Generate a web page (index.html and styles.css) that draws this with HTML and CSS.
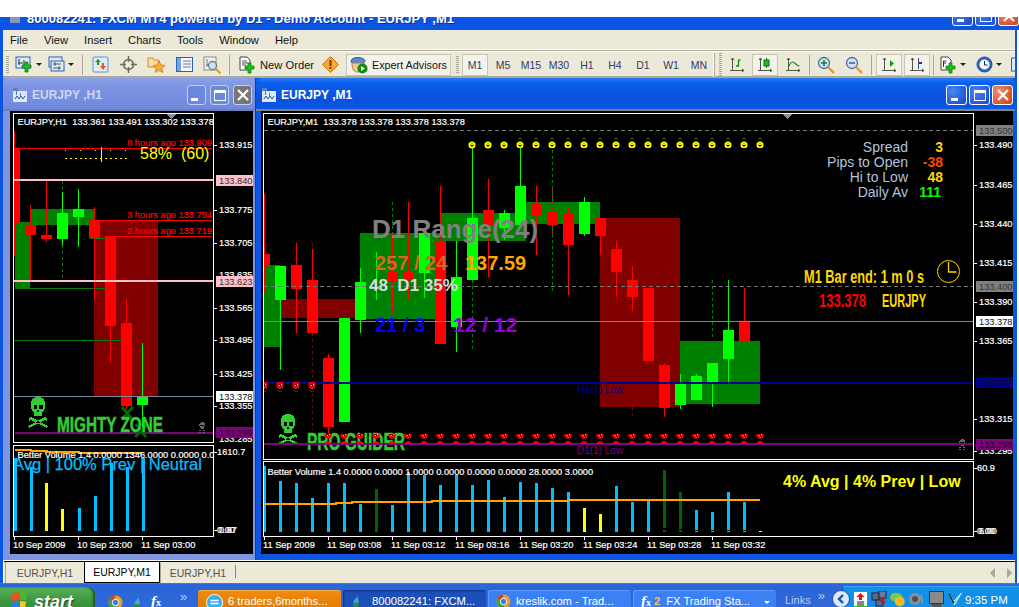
FILE: index.html
```html
<!DOCTYPE html>
<html lang="en">
<head>
<meta charset="utf-8">
<title>MetaTrader</title>
<link rel="stylesheet" href="styles.css">
</head>
<body>
<svg class="defs" width="0" height="0" aria-hidden="true">
  <defs>
    <pattern id="yd" width="16" height="10" patternUnits="userSpaceOnUse"><circle cx="8" cy="5" r="2.500" fill="#000" stroke="#ff0" stroke-width="2"/><rect x="7" y="4" width="2" height="1" fill="#ff0"/></pattern>
    <pattern id="rd" width="16" height="10" patternUnits="userSpaceOnUse"><circle cx="8" cy="5" r="2.500" fill="#000" stroke="#f00" stroke-width="2.400"/><rect x="7" y="5" width="1" height="1" fill="#ff0"/><rect x="9" y="4" width="1" height="1" fill="#ff0"/></pattern>
    <symbol id="skull" viewBox="0 0 20 32">
      <path fill-rule="evenodd" d="M10 0C4 0 2.500 4 2.500 8c0 4 1.500 5.500 3.500 7v4h8v-4c2-1.500 3.500-3 3.500-7 0-4-1.500-8-7.500-8zM5.500 7.500h3.500v4h-3.500zM11 7.500h3.500v4H11zM9 12.500h2v2H9z"/>
      <path d="M1 21l2-1 15 8 2 1-1 2-2-1L3 23l-2 1zM19 21l-2-1-15 8-2 1 1 2 2-1 14-7 2 1z"/>
    </symbol>
    <symbol id="chico" viewBox="0 0 14 14"><path fill="#dfe7f5" d="M0 0h5v3h9v11H0z"/><path fill="#5a7fc0" d="M0 0h5v3H0zM7 5h1v3H7zM3 2h1v5H3z"/><path fill="none" stroke="#2a5aa8" d="M2 11l2-3 2 3 2-3 2 3 2-3"/></symbol>
    <symbol id="axes" viewBox="0 0 16 16"><path fill="none" stroke="#55534a" d="M3.500 1v13M1 13.500h14M2 3l1.500-2L5 3M13 12l2 1.500-2 1.500"/></symbol>
  </defs>
</svg>

<div class="topgap"></div>
<header class="titlebar">
  <span class="appico"></span>
  <span class="apptitle">800082241: FXCM MT4 powered by D1 - Demo Account - EURJPY ,M1</span>
  <div class="winbtns appbtns">
    <span class="wb"><i class="g-min"></i></span><span class="wb"><i class="g-max"></i></span><span class="wb wb-close"><svg viewBox="0 0 12 12"><path d="M1 1l10 10M11 1L1 11" stroke="#fff" stroke-width="2.200"/></svg></span>
  </div>
</header>

<nav class="menubar">
  <span>File</span><span>View</span><span>Insert</span><span>Charts</span><span>Tools</span><span>Window</span><span>Help</span>
</nav>

<div class="toolbar">
  <span class="grip"></span>
  <span class="ti w32"><svg width="18" height="18" viewBox="0 0 18 18"><rect x="1" y="1" width="14" height="11" fill="#dfeaf8" stroke="#2a62b0"/><path d="M4 3v6M3 7h5M9 4v5" stroke="#333" fill="none"/><path d="M10 6h3v3h3v3h-3v4h-3v-4H7V9h3z" fill="#1cc01c" stroke="#0a700a" stroke-width=".7"/></svg><b class="caret"></b></span>
  <span class="ti w34"><svg width="17" height="17" viewBox="0 0 17 17"><rect x="1" y="1" width="13" height="10" fill="#dfeaf8" stroke="#2a62b0"/><rect x="3" y="5" width="13" height="10" fill="#dfeaf8" stroke="#2a62b0"/><path d="M5 8h8M5 12h8M7 6v4M11 10v4" stroke="#555" fill="none"/></svg><b class="caret"></b></span>
  <span class="sep w8"></span>
  <span class="ti"><svg width="17" height="17" viewBox="0 0 17 17"><rect x="1" y="1" width="15" height="15" rx="1" fill="#dfeaf8" stroke="#6a90c8"/><path d="M5 9V6H3l3-3 3 3H7v3z" fill="#12a012"/><path d="M10 7v3H8l3 4 3-4h-2V7z" fill="#e05a20"/></svg></span>
  <span class="ti"><svg width="17" height="17" viewBox="0 0 17 17"><circle cx="8.500" cy="8.500" r="5" fill="none" stroke="#6b6b60" stroke-width="1.500"/><path d="M8.500 0v6M8.500 11v6M0 8.500h6M11 8.500h6" stroke="#6b6b60" stroke-width="1.500"/></svg></span>
  <span class="ti"><svg width="19" height="17" viewBox="0 0 19 17"><path d="M1 2h5l1 2h5v7H1z" fill="#f8dca0" stroke="#c09040"/><path d="M12 5l2 4 4 .5-3 3 .8 4-3.800-2-3.800 2 .8-4-3-3 4-.5z" fill="#f8b030" stroke="#c87010" stroke-width=".7"/></svg></span>
  <span class="ti"><svg width="17" height="15" viewBox="0 0 17 15"><rect x=".5" y=".5" width="16" height="14" fill="#f4f8fe" stroke="#2a62b0"/><rect x="1" y="1" width="4" height="13" fill="#7aa2dc"/><path d="M7 4h8M7 7h8M7 10h8" stroke="#6a7a90"/></svg></span>
  <span class="ti"><svg width="19" height="18" viewBox="0 0 19 18"><rect x="1" y="1" width="12" height="13" fill="#f4f4ee" stroke="#8a8a80"/><path d="M4 3v8M3 9h7" stroke="#777" fill="none"/><circle cx="9.500" cy="9.500" r="4" fill="#cfe0f6" stroke="#6a7a90" stroke-width="1.300"/><path d="M12.500 12.500l5 5" stroke="#e09a30" stroke-width="2"/></svg></span>
  <span class="sep w6"></span>
  <span class="neworder"><svg width="17" height="18" viewBox="0 0 17 18"><path d="M1 1h7l3 3v10H1z" fill="#fff" stroke="#444"/><path d="M3 5h5M3 7h6M3 9h4" stroke="#555"/><path d="M9 7h3v3h3v3h-3v4H9v-4H6v-3h3z" fill="#1cc01c" stroke="#0a700a" stroke-width=".7"/></svg>New Order</span>
  <span class="ti w26"><svg width="17" height="17" viewBox="0 0 17 17"><path d="M8.500.5l8 8-8 8-8-8z" fill="#f8a838" stroke="#c87010"/><rect x="7.500" y="4" width="2" height="6" fill="#7a3a10"/><rect x="7.500" y="11" width="2" height="2" fill="#7a3a10"/></svg></span>
  <span class="ea"><svg width="18" height="18" viewBox="0 0 18 18"><ellipse cx="8" cy="5" rx="7" ry="3.500" fill="#5a8ad0" stroke="#2a5aa0"/><path d="M2 7c0 7 2 9 6 9s6-3 6-9z" fill="#f0c890" stroke="#b08040"/><circle cx="12.500" cy="12.500" r="5" fill="#128a12"/><path d="M11 10l4 2.500-4 2.500z" fill="#fff"/></svg>Expert Advisors</span>
  <span class="grip wide"></span>
  <div class="tfs">
    <span class="tf on">M1</span><span class="tf">M5</span><span class="tf">M15</span><span class="tf">M30</span><span class="tf">H1</span><span class="tf">H4</span><span class="tf">D1</span><span class="tf">W1</span><span class="tf">MN</span>
  </div>
  <span class="grip break"></span>
  <span class="ti"><svg width="16" height="16"><use href="#axes"/><path d="M9.500 3v6H7M9.500 3h2" fill="none" stroke="#128a12" stroke-width="1.300"/></svg></span>
  <span class="tibox"><svg width="16" height="16"><use href="#axes"/><path d="M9.500 1v10" stroke="#0a700a"/><rect x="7" y="3" width="5" height="6" fill="#1cc01c" stroke="#0a700a"/></svg></span>
  <span class="ti"><svg width="16" height="16"><use href="#axes"/><path d="M3.500 10c2-5 4-6 6-4s3 3 5 3" fill="none" stroke="#128a12" stroke-width="1.100"/></svg></span>
  <span class="sep w5"></span>
  <span class="ti"><svg width="18" height="18" viewBox="0 0 18 18"><circle cx="7" cy="7" r="5.500" fill="#cfe0f6" stroke="#4a6fa8" stroke-width="1.300"/><path d="M4 7h6M7 4v6" stroke="#128a12" stroke-width="1.600"/><path d="M11 11l6 6" stroke="#e09a30" stroke-width="2.400"/></svg></span>
  <span class="ti"><svg width="18" height="18" viewBox="0 0 18 18"><circle cx="7" cy="7" r="5.500" fill="#cfe0f6" stroke="#4a6fa8" stroke-width="1.300"/><path d="M4 7h6" stroke="#3a6a9a" stroke-width="1.600"/><path d="M11 11l6 6" stroke="#e09a30" stroke-width="2.400"/></svg></span>
  <span class="sep w7"></span>
  <span class="tibox"><svg width="16" height="16"><use href="#axes"/><path d="M9 3l4 3.500-4 3.500z" fill="#12a012"/></svg></span>
  <span class="tibox"><svg width="16" height="16"><use href="#axes"/><path d="M9.500 1v11" stroke="#2a4ab0"/><path d="M10 5h3v2h-3z" fill="#a01010"/></svg></span>
  <span class="sep w4"></span>
  <span class="ti w36"><svg width="17" height="18" viewBox="0 0 17 18"><path d="M1 1h7l3 3v10H1z" fill="#fff" stroke="#444"/><path d="M3.500 11V5h3M3 7h3" stroke="#333" fill="none"/><path d="M9 7h3v3h3v3h-3v4H9v-4H6v-3h3z" fill="#1cc01c" stroke="#0a700a" stroke-width=".7"/></svg><b class="caret"></b></span>
  <span class="ti w35"><svg width="17" height="17" viewBox="0 0 17 17"><circle cx="8.500" cy="8.500" r="7.500" fill="#2a6ac0" stroke="#1a4a90"/><circle cx="8.500" cy="8.500" r="5" fill="#f4f8fe"/><path d="M8.500 5v4h3" stroke="#224" fill="none"/></svg><b class="caret"></b></span>
  <span class="ti w9"><svg width="4" height="16" viewBox="0 0 4 16"><rect x=".5" y="1" width="8" height="13" fill="#dfeaf8" stroke="#2a62b0"/></svg></span>
</div>

<main class="mdi">
  <section class="win inactive">
    <div class="wintitle">
      <svg class="wico" width="14" height="14"><use href="#chico"/></svg>
      <span class="wname">EURJPY ,H1</span>
      <div class="winbtns"><span class="wb"><i class="g-min"></i></span><span class="wb"><i class="g-max"></i></span><span class="wb wb-close"><svg viewBox="0 0 12 12"><path d="M1 1l10 10M11 1L1 11" stroke="#fff" stroke-width="2.200"/></svg></span></div>
    </div>
    <svg class="chart chart-l" viewBox="10 111 243 443" width="243" height="443" shape-rendering="crispEdges">
      <defs><clipPath id="cl"><rect x="14" y="114" width="199" height="422"/></clipPath></defs>
      <g clip-path="url(#cl)">
        <path fill="#008000" d="M15 222h15v67H15zM30 209h65v16H30z"/>
        <path fill="#800000" d="M94 220h64v176H94z"/>
        <path stroke="#008000" d="M90 238.500h15M30 288.500h75M14 340.500h107"/>
        <path stroke="#f00" d="M14.500 131v125M30.500 205v75M46.500 181v61M94.500 207v93M110.500 326v37M126.500 299v111"/>
        <path stroke="#0f0" d="M62.500 192v53M78.500 189v58M142.500 343v90"/>
        <path stroke="#008000" stroke-dasharray="3 3" d="M62.500 181v11M62.500 245v35"/>
        <path fill="#f00" d="M14 148h6v75h-6zM25 225h11v10H25zM41 235h11v4H41zM89 220h11v18H89zM105 236h11v90h-11zM121 323h11v83h-11z"/>
        <path fill="#0f0" d="M57 213h11v26H57zM73 209h11v8H73zM137 396h11v9h-11z"/>
        <path stroke="#f00" d="M14 148.500h198M94 220.500h118M105 236.500h107"/>
        <path stroke="#ffc0cb" stroke-width="2" d="M14 180h199M14 281h199"/>
        <path stroke="#778899" d="M14 396.500h199"/>
        <path stroke="#800080" stroke-width="2" d="M15 433h198"/>
        <path stroke="#006400" stroke-width="3" shape-rendering="auto" d="M122 407l10 12M133 407l-11 12M136 424l10 13M148 424l-13 13"/>
        <path stroke="#ff0" stroke-dasharray="2 3" d="M65 158.500h65"/>
        <path stroke="#ff0" stroke-dasharray="1 14" d="M65 150.500h65"/>
        <path stroke="#ff0" d="M101.500 147v15"/>
        <svg x="28" y="397" width="20" height="32" class="sk-g"><use href="#skull"/></svg>
        <svg x="198" y="422" width="8" height="12" class="sk-d"><use href="#skull"/></svg>
        <text class="t-red" x="212" y="146">8 hours ago 133.909</text>
        <text class="t-red" x="212" y="218">3 hours ago 133.754</text>
        <text class="t-red" x="212" y="234">2 hours ago 133.719</text>
        <text class="t-ylw" x="140" y="159">58%  (60)</text>
        <text class="t-zone" x="57" y="432" textLength="106" lengthAdjust="spacingAndGlyphs">MIGHTY ZONE</text>
        <path fill="#00bfff" d="M14 458h3v73h-3zM30 467h3v64h-3zM78 508h3v23h-3zM94 496h3v35h-3zM110 463h3v68h-3zM126 467h3v64h-3zM142 458h3v73h-3z"/>
        <path fill="#ff0" d="M45 483h3v48h-3zM61 509h3v22h-3z"/>
        <path stroke="#ffa500" stroke-width="1.500" fill="none" d="M15 450h16v1h16v1h32v1h63"/>
        <text class="t" x="17.500" y="125">EURJPY,H1  133.361 133.491 133.302 133.378</text>
        <text class="t" x="17.500" y="458">Better Volume 1.4 0.0000 1346.0000 0.0000 0.0000 0.</text>
        <text class="t-sky" x="13" y="470">Avg | 100% Prev | Neutral</text>
      </g>
      <path fill="#8090a0" d="M167 114h9l-4.500 5z"/>
      <path fill="none" stroke="#fff" d="M13.500 113.500h200v329h-200zM13.500 445.500h200v91h-200z"/>
      <path stroke="#fff" d="M213 145.500h4M213 210.500h4M213 243.500h4M213 308.500h4M213 340.500h4M213 374.500h4M213 406.500h4M213 452.500h4M213 530.500h4M14.500 536v4M78.500 536v4M142.500 536v4"/>
      <text class="t" x="219" y="148">133.915</text>
      <text class="t" x="219" y="213">133.775</text>
      <text class="t" x="219" y="246">133.705</text>
      <text class="t" x="219" y="278">133.635</text>
      <text class="t" x="219" y="311">133.565</text>
      <text class="t" x="219" y="343">133.495</text>
      <text class="t" x="219" y="377">133.425</text>
      <text class="t" x="219" y="409">133.355</text>
      <text class="t" x="219" y="442">133.285</text>
      <rect x="216" y="175" width="37" height="11" fill="#ffc0cb"/><text class="t-d" x="219" y="184">133.840</text>
      <rect x="216" y="276" width="37" height="11" fill="#ffc0cb"/><text class="t-d" x="219" y="285">133.623</text>
      <rect x="216" y="391" width="37" height="11" fill="#fff"/><text class="t-k" x="219" y="400">133.378</text>
      <rect x="216" y="427" width="37" height="11" fill="#800080"/><text class="t-k" x="219" y="436">133.299</text>
      <text class="t" x="217" y="455">1610.7</text>
      <text class="t" x="217" y="533">0.00</text><text class="t" x="219" y="533">0.67</text>
      <text class="t" x="13" y="548">10 Sep 2009</text>
      <text class="t" x="77" y="548">10 Sep 23:00</text>
      <text class="t" x="141" y="548">11 Sep 03:00</text>
    </svg>
  </section>

  <section class="win active">
    <div class="wintitle">
      <svg class="wico" width="14" height="14"><use href="#chico"/></svg>
      <span class="wname">EURJPY ,M1</span>
      <div class="winbtns"><span class="wb"><i class="g-min"></i></span><span class="wb"><i class="g-max"></i></span><span class="wb wb-close"><svg viewBox="0 0 12 12"><path d="M1 1l10 10M11 1L1 11" stroke="#fff" stroke-width="2.200"/></svg></span></div>
    </div>
    <svg class="chart chart-r" viewBox="261 111 752 443" width="752" height="443" shape-rendering="crispEdges">
      <defs><clipPath id="cr"><rect x="264" y="114" width="709" height="422"/></clipPath></defs>
      <g clip-path="url(#cr)">
        <path fill="#008000" d="M264 265h16v82h-16zM360 233h80v86h-80zM441 213h85v28h-85zM526 202h74v22h-74zM680 341h80v63h-80z"/>
        <path fill="#800000" d="M280 299h80v19h-80zM600 218h80v189h-80z"/>
        <path stroke="#f00" d="M264.500 194v97M296.500 243v90M312.500 249v31M328.500 354v83M392.500 233v80M408.500 202v98M440.500 186v55M488.500 179v98M536.500 186v69M552.500 187v49M568.500 207v88M600.500 236v19M616.500 241v56M632.500 266v45M664.500 363v54M744.500 288v34"/>
        <path stroke="#0f0" d="M280.500 300v70M360.500 268v65M376.500 252v48M424.500 233v65M456.500 241v111M472.500 147v71M504.500 210v30M520.500 145v41M584.500 197v39M680.500 374v35M696.500 374v2M712.500 383v24M728.500 280v102"/>
        <path stroke="#800000" stroke-dasharray="3 3" d="M312.500 243v6M312.500 333v97M632.500 407v9"/>
        <path stroke="#008000" stroke-dasharray="3 3" d="M392.500 202v31M472.500 280v72M552.500 150v143M712.500 280v60"/>
        <path fill="#f00" d="M264 254h6v11h-6zM291 265h11v24h-11zM307 280h11v53h-11zM323 358h11v69h-11zM387 271h11v10h-11zM403 272h11v8h-11zM435 241h11v103h-11zM483 210h11v15h-11zM531 204h11v12h-11zM547 211h11v14h-11zM563 213h11v32h-11zM595 218h11v18h-11zM611 249h11v23h-11zM627 280h11v17h-11zM643 288h11v73h-11zM659 365h11v43h-11zM739 322h11v20h-11z"/>
        <path fill="#0f0" d="M275 266h11v34h-11zM339 318h11v104h-11zM355 282h11v38h-11zM419 233h11v40h-11zM451 277h11v50h-11zM467 218h11v62h-11zM499 213h11v15h-11zM515 186h11v39h-11zM579 202h11v32h-11zM675 384h11v21h-11zM691 376h11v24h-11zM707 363h11v20h-11zM723 330h11v29h-11z"/>
        <path stroke="#778899" d="M264 321.500h709"/>
        <path stroke="#777" stroke-dasharray="4 3" d="M264 130.500h709M264 286.500h709"/>
        <path stroke="#00008b" stroke-width="2" d="M264 383h709"/>
        <text class="t-navy" x="577" y="393">H1(1) Low</text>
        <svg x="278" y="414" width="20" height="32" class="sk-g"><use href="#skull"/></svg>
        <svg x="958" y="439" width="8" height="12" class="sk-d"><use href="#skull"/></svg>
        <text class="t-pro" x="307" y="450" textLength="98" lengthAdjust="spacingAndGlyphs">PRO GUIDER</text>
        <path stroke="#800080" stroke-width="2" d="M264 444h709"/>
        <text class="t-pur" x="577" y="454">D1(1) Low</text>
        <rect x="463.500" y="141" width="48" height="10" fill="url(#yd)"/>
        <rect x="511.500" y="138" width="256" height="10" fill="url(#yd)"/>
        <rect x="263.500" y="382" width="56" height="10" fill="url(#rd)"/>
        <rect x="319.500" y="434" width="448" height="10" fill="url(#rd)"/>
        <text class="t-rng" x="372" y="238">D1 Range(24)</text>
        <text class="t-cho" x="375" y="270">257 / 24</text>
        <text class="t-org" x="465" y="270">137.59</text>
        <text class="t-gns" x="369" y="291">48  D1 35%</text>
        <text class="t-blu" x="375" y="332">21 / 3</text>
        <text class="t-vio" x="453" y="332">12 / 12</text>
        <text class="t-lbl" x="908" y="152">Spread</text>
        <text class="t-lbl" x="908" y="167">Pips to Open</text>
        <text class="t-lbl" x="908" y="182">Hi to Low</text>
        <text class="t-lbl" x="908" y="197">Daily Av</text>
        <text class="t-val v-gold" x="943" y="152">3</text>
        <text class="t-val v-oran" x="943" y="167">-38</text>
        <text class="t-val v-gold" x="943" y="182">48</text>
        <text class="t-val v-lime" x="941" y="197">111</text>
        <text class="t-imp v-fgold" x="804" y="283" textLength="120" lengthAdjust="spacingAndGlyphs">M1 Bar end: 1 m 0 s</text>
        <text class="t-imp v-fred" x="819" y="307" textLength="47" lengthAdjust="spacingAndGlyphs">133.378</text>
        <text class="t-imp v-fgold" x="882" y="307" textLength="44" lengthAdjust="spacingAndGlyphs">EURJPY</text>
        <g shape-rendering="auto" fill="none" stroke="#ffd700"><circle cx="948.500" cy="271.500" r="11"/><path d="M948.500 262v10h8" stroke-width="1.300"/></g>
        <text class="t" x="267.500" y="125">EURJPY,M1  133.378 133.378 133.378 133.378</text>
        <path fill="#00bfff" d="M264 466h2v66h-2zM279 481h3v51h-3zM295 483h3v49h-3zM311 498h3v34h-3zM327 483h3v49h-3zM343 483h3v49h-3zM359 504h3v28h-3zM391 505h3v27h-3zM407 472h3v60h-3zM423 475h3v57h-3zM439 485h3v47h-3zM455 475h3v57h-3zM471 485h3v47h-3zM487 480h3v52h-3zM503 497h3v35h-3zM519 482h3v50h-3zM535 483h3v49h-3zM551 488h3v44h-3zM567 492h3v40h-3zM615 486h3v46h-3zM631 502h3v30h-3zM647 501h3v31h-3zM695 510h3v20h-3zM695 531h3v1h-3zM711 512h3v18h-3zM711 531h3v1h-3zM727 492h3v38h-3zM727 531h3v1h-3zM743 502h3v28h-3zM743 531h3v1h-3z"/>
        <path fill="#006400" d="M375 489h3v43h-3zM663 470h3v58h-3zM663 530h3v2h-3zM679 492h3v37h-3zM679 530h3v2h-3z"/>
        <path fill="#ff0" d="M583 508h3v24h-3zM599 514h3v18h-3zM759 531h3v1h-3z"/>
        <path fill="none" stroke="#ffa500" stroke-width="2" d="M264 504h72v-1h16v-1h80v-1h136v-1h192"/>
        <text class="t" x="267.500" y="475">Better Volume 1.4 0.0000 0.0000 1.0000 0.0000 0.0000 0.0000 28.0000 3.0000</text>
        <text class="t-avg" x="783" y="487">4% Avg | 4% Prev | Low</text>
      </g>
      <path fill="#8090a0" d="M783 114h9l-4.500 5z"/>
      <path fill="none" stroke="#fff" d="M263.500 113.500h710v346h-710zM263.500 461.500h710v75h-710z"/>
      <path stroke="#fff" d="M973 145.500h4M973 185.500h4M973 224.500h4M973 263.500h4M973 302.500h4M973 341.500h4M973 419.500h4M973 451.500h4M973 468.500h4M973 531.500h4M264.500 536v4M328.500 536v4M392.500 536v4M456.500 536v4M520.500 536v4M584.500 536v4M648.500 536v4M712.500 536v4"/>
      <text class="t" x="979" y="148">133.490</text>
      <text class="t" x="979" y="188">133.465</text>
      <text class="t" x="979" y="227">133.440</text>
      <text class="t" x="979" y="266">133.415</text>
      <text class="t" x="979" y="305">133.390</text>
      <text class="t" x="979" y="344">133.365</text>
      <text class="t" x="979" y="422">133.315</text>
      <text class="t" x="979" y="454">133.295</text>
      <rect x="976" y="125" width="37" height="11" fill="#808080"/><text class="t-d" x="979" y="134">133.500</text>
      <rect x="976" y="281" width="37" height="11" fill="#808080"/><text class="t-d" x="979" y="290">133.400</text>
      <rect x="976" y="316" width="37" height="11" fill="#fff"/><text class="t-k" x="979" y="325">133.378</text>
      <rect x="976" y="377" width="37" height="11" fill="#00008b"/><text class="t-k" x="979" y="386">133.338</text>
      <rect x="976" y="439" width="37" height="11" fill="#800080"/><text class="t-k" x="979" y="448">133.299</text>
      <text class="t" x="977" y="471">60.9</text>
      <text class="t" x="977" y="534">0.00</text><text class="t" x="979" y="534">6.00</text>
      <text class="t" x="263" y="548">11 Sep 2009</text>
      <text class="t" x="327" y="548">11 Sep 03:08</text>
      <text class="t" x="391" y="548">11 Sep 03:12</text>
      <text class="t" x="455" y="548">11 Sep 03:16</text>
      <text class="t" x="519" y="548">11 Sep 03:20</text>
      <text class="t" x="583" y="548">11 Sep 03:24</text>
      <text class="t" x="647" y="548">11 Sep 03:28</text>
      <text class="t" x="711" y="548">11 Sep 03:32</text>
    </svg>
  </section>
</main>

<div class="tabbar">
  <span class="tab">EURJPY,H1</span>
  <span class="tab on">EURJPY,M1</span>
  <span class="tab last">EURJPY,H1</span>
  <span class="tabarrows"><svg width="24" height="10" viewBox="0 0 24 10"><path d="M6 0v10L1 5zM18 0v10l5-5z" fill="#a8a69a"/></svg></span>
</div>

<footer class="taskbar">
  <div class="start">
    <svg width="18" height="18" viewBox="0 0 18 18"><path d="M1 2l7-2v8l-7 1z" fill="#e8541c"/><path d="M9 0l7 1-1 7-6-.5z" fill="#4cb832"/><path d="M0 10l8-1v8l-8 1z" fill="#2a7ae8"/><path d="M9 9l6 .5-1 8-5-.5z" fill="#f8c818"/></svg>
    <span>start</span>
  </div>
  <div class="quick">
    <svg width="15" height="15" viewBox="0 0 15 15"><circle cx="7.500" cy="7.500" r="7" fill="#e8a020"/><path d="M7.500.5a7 7 0 0 0-6 3.500l3 5z" fill="#d83828"/><path d="M1.500 4a7 7 0 0 0 5 10.500l3-5z" fill="#3aa838"/><circle cx="7.500" cy="7.500" r="3.200" fill="#3a7ae0" stroke="#fff"/></svg>
    <svg width="10" height="15" viewBox="0 0 10 15"><path d="M7 0C8 3 3 5 2 9c-.5 3 1 5 3 5s3-2 3-5C8 5 6 4 7 0z" fill="#3aa8d8"/><path d="M2 9c2 0 4 1 6 0 0 3-1 5-3 5S2 12 2 9z" fill="#2a8a3a"/></svg>
    <span class="fx">f<small>x</small></span>
    <span class="chev">»</span>
  </div>
  <div class="tasks">
    <span class="task orange"><svg width="17" height="17" viewBox="0 0 17 17"><circle cx="8.500" cy="8.500" r="8" fill="#3ab0f0" stroke="#fff"/><path d="M4.500 6.500h8M4.500 9.500h8" stroke="#fff" stroke-width="1.600"/></svg>6 traders,6months...</span>
    <span class="task pressed"><svg width="10" height="14" viewBox="0 0 10 15"><path d="M7 0C8 3 3 5 2 9c-.5 3 1 5 3 5s3-2 3-5C8 5 6 4 7 0z" fill="#3aa8d8"/><path d="M2 9c2 0 4 1 6 0 0 3-1 5-3 5S2 12 2 9z" fill="#2a8a3a"/></svg><b>800082241: FXCM...</b></span>
    <span class="task"><svg width="15" height="15" viewBox="0 0 15 15"><circle cx="7.500" cy="7.500" r="7" fill="#e8a020"/><path d="M7.500.5a7 7 0 0 0-6 3.500l3 5z" fill="#d83828"/><path d="M1.500 4a7 7 0 0 0 5 10.500l3-5z" fill="#3aa838"/><circle cx="7.500" cy="7.500" r="3.200" fill="#3a7ae0" stroke="#fff"/></svg>kreslik.com - Trad...</span>
    <span class="task fxtask"><span class="fx">f<small>x</small></span><em>2</em>FX Trading Sta...<b class="dn"></b></span>
  </div>
  <span class="links">Links</span><span class="chev">»</span>
  <div class="tray">
    <span class="trayback"><svg width="10" height="10" viewBox="0 0 10 10"><path d="M7 1L3 5l4 4" fill="none" stroke="#1a50b0" stroke-width="2.400"/></svg></span>
    <svg width="15" height="16" viewBox="0 0 15 16"><rect x=".5" y=".5" width="14" height="15" fill="#fff" stroke="#18c018"/><path d="M7.500 2l4 4H9v3H6V6H3.500z" fill="#e01010"/><rect x="4" y="10" width="7" height="5" fill="#888"/></svg>
    <svg width="16" height="16" viewBox="0 0 16 16"><rect x="1" y="2" width="7" height="7" fill="#5a6a90" stroke="#223"/><rect x="8" y="0" width="7" height="7" fill="#6a7aa0" stroke="#223"/><rect x="5" y="9" width="7" height="6" fill="#5a6a90" stroke="#223"/><path d="M10 7l4 5M14 7l-4 5" stroke="#e01010" stroke-width="1.500"/></svg>
    <svg width="16" height="16" viewBox="0 0 18 16"><ellipse cx="7" cy="6" rx="7" ry="5" fill="#7ac850"/><circle cx="11" cy="11" r="5.500" fill="#f8b820"/></svg>
    <svg width="14" height="16" viewBox="0 0 14 16"><circle cx="6" cy="8" r="6" fill="#8a8f98"/><circle cx="6" cy="8" r="3" fill="#4a4f58"/><path d="M12 4l2 9" stroke="#9ab"/></svg>
    <svg class="trayscr" width="15" height="16" viewBox="0 0 15 16"><rect x=".5" y=".5" width="14" height="12" fill="#8a8a8a" stroke="#333"/><rect x="3" y="13" width="9" height="3" fill="#555"/></svg>
    <svg width="14" height="16" viewBox="0 0 17 16"><path d="M1 1l6 10L16 1l-8 14z" fill="#30d8c0" stroke="#fff"/><path d="M1 1l6 12" stroke="#111" stroke-width="1.500"/></svg>
    <time>9:35 PM</time>
  </div>
</footer>
</body>
</html>
```

FILE: styles.css
```css
* { box-sizing: border-box; }
html, body { margin: 0; padding: 0; }
body {
  width: 1019px;
  height: 607px;
  overflow: hidden;
  font-family: "Liberation Sans", Arial, sans-serif;
  font-size: 11.5px;
  color: #000;
  background: linear-gradient(90deg, #0a55e4 0 3px, #fff 3px 1015px, #0a55e4 1015px 1017px, #fff 1017px);
  display: flex;
  flex-direction: column;
}
.defs { position: absolute; }

.topgap { height: 17px; flex: none; background: #fff; }
.titlebar {
  flex: none;
  height: 13px;
  overflow: hidden;
  background: #0a55e4;
  display: flex;
  align-items: flex-start;
  padding-left: 10px;
  color: #fff;
}
.appico { width: 10px; height: 6px; background: #8a96b8; flex: none; }
.apptitle {
  margin: -6px 0 0 7px;
  font-size: 13px;
  font-weight: 700;
  line-height: 15px;
  white-space: nowrap;
  text-shadow: 1px 1px 0 #0a2f90;
  flex: 1;
}
.appbtns { margin: -11px 6px 0 0; }

.menubar {
  flex: none;
  height: 20px;
  margin: 0 4px 0 3px;
  background: #ece9d8;
  display: flex;
  align-items: center;
  padding-left: 7px;
  gap: 16px;
  font-size: 11.2px;
  border-bottom: 1px solid #fff;
  color: #111;
}

.toolbar {
  flex: none;
  height: 28px;
  margin: 0 4px 0 3px;
  padding: 2px 0 0 1px;
  background: #ece9d8;
  border-top: 1px solid #aca899;
  border-bottom: 2px solid #aca899;
  display: flex;
  align-items: center;
  color: #111;
  box-shadow: inset 0 1px 0 #fff;
}
.grip { flex: none; width: 8px; height: 18px; background: repeating-linear-gradient(#a8a698 0 1px, transparent 1px 2px) 2px 0 / 3px 100% no-repeat; }
.grip.wide { width: 10px; background-position: 5px 0; }
.grip.break { width: 10px; background-position: 5px 0; border-left: 1px solid #fff; box-shadow: inset 1px 0 0 #aca899; height: 24px; }
.ti { flex: none; width: 28px; height: 22px; display: flex; align-items: center; justify-content: center; }
.w32 { width: 32px; } .w34 { width: 34px; } .w26 { width: 26px; } .w36 { width: 36px; } .w35 { width: 35px; } .w9 { width: 9px; justify-content: flex-end; }
.caret { width: 0; height: 0; margin-left: 3px; border: 3px solid transparent; border-top: 3px solid #222; border-bottom: 0; }
.sep { flex: none; height: 20px; background: linear-gradient(#aca899, #aca899) center / 1px 100% no-repeat; }
.w8 { width: 8px; } .w6 { width: 6px; } .w5 { width: 5px; } .w7 { width: 7px; } .w4 { width: 4px; }
.neworder { flex: none; width: 85px; padding-left: 7px; display: flex; align-items: center; gap: 4px; font-size: 11.2px; white-space: nowrap; }
.ea {
  flex: none;
  width: 105px;
  height: 22px;
  margin-left: 3px;
  padding-left: 3px;
  display: flex;
  align-items: center;
  gap: 4px;
  font-size: 10.800px;
  white-space: nowrap;
  background: #f4f3ea;
  border: 1px solid #c8c5b2;
}
.tfs { flex: none; display: flex; width: 252px; color: #2f3a6a; font-size: 10.500px; }
.tf { flex: none; width: 28px; height: 22px; display: flex; align-items: center; justify-content: center; }
.tf.on { width: 26px; margin: 0 1px; background: #f4f3ea; border: 1px solid #c8c5b2; }
.tibox { flex: none; width: 26px; height: 22px; margin: 0 1px; display: flex; align-items: center; justify-content: center; background: #f4f3ea; border: 1px solid #c8c5b2; }

.mdi {
  flex: none;
  height: 482px;
  margin: 0 2px 0 3px;
  width: 1012px;
  display: flex;
  gap: 1px;
  background: #0a3cb8;
}
.win { flex: none; display: flex; flex-direction: column; }
.win.inactive { width: 252px; background: #7d95e2; padding-left: 7px; padding-right: 2px; }
.win.active { width: 759px; background: #0a55e4; padding-left: 5px; padding-right: 2px; }
.wintitle { flex: none; height: 33px; display: flex; align-items: center; padding-top: 3px; border-bottom: 2px solid #84827a; }
.inactive .wintitle { margin: 0 -2px 0 -7px; padding-left: 10px; background: linear-gradient(#8aa2ea, #7d95e2 25%, #7089dc); border-radius: 6px 6px 0 0; border-bottom-color: #6a7fb8; color: #ccd6f2; }
.active .wintitle { margin: 0 -2px 0 -5px; padding-left: 6px; padding-right: 2px; background: linear-gradient(#2a7af2, #0a5fee 15%, #0a50dc 70%, #0a58e8); color: #fff; border-radius: 6px 6px 0 0; }
.wico { flex: none; margin-right: 5px; }
.wname { flex: 1; font-weight: 700; font-size: 12px; white-space: nowrap; }
.winbtns { flex: none; display: flex; gap: 2px; margin-right: 0; }
.wb { width: 21px; height: 20px; border: 1px solid #fff; border-radius: 3px; background: radial-gradient(circle at 30% 30%, #4a86f0, #1f52d4 80%); display: flex; align-items: center; justify-content: center; }
.wb svg { width: 12px; height: 12px; }
.wb-close { background: radial-gradient(circle at 30% 30%, #f09070, #d84a20 80%); }
.inactive .winbtns { gap: 4px; margin-right: 3px; }
.inactive .wb { width: 19px; background: #6a88dc; border-color: #c4d0f0; }
.inactive .wb-close { background: #77777a; }
.g-min { display: block; width: 7px; height: 3px; background: #fff; margin-top: 9px; margin-right: 4px; }
.g-max { display: block; width: 12px; height: 11px; border: 1px solid #fff; border-top-width: 3px; }
.chart { flex: none; display: block; background: #000; }
.chart text { white-space: pre; font-family: "Liberation Sans", Arial, sans-serif; }

.t { font-size: 9.250px; fill: #fff; stroke: #fff; stroke-width: .2px; }
.t-d { font-size: 9.250px; fill: #333; }
.t-k { font-size: 9.250px; fill: #111; }
.t-red { font-size: 9.250px; fill: #f00; stroke: #f00; stroke-width: .2px; text-anchor: end; }
.t-ylw { font-size: 16px; fill: #ff0; }
.t-sky { font-size: 16.500px; fill: #00bfff; stroke: #00bfff; stroke-width: .25px; }
.t-zone { font-size: 22px; font-weight: 700; fill: #32cd32; stroke: #32cd32; stroke-width: .5px; }
.t-pro { font-size: 23px; font-weight: 700; fill: #32cd32; stroke: #32cd32; stroke-width: .5px; }
.t-navy { font-size: 10px; fill: #00008b; }
.t-pur { font-size: 10px; fill: #800080; }
.t-rng { font-size: 26px; font-weight: 700; fill: #808080; }
.t-cho { font-size: 20px; font-weight: 700; fill: #d2691e; }
.t-org { font-size: 20px; font-weight: 700; fill: #ffa500; }
.t-gns { font-size: 17px; font-weight: 700; fill: #dcdcdc; }
.t-blu { font-size: 20px; font-weight: 700; fill: #0000ff; }
.t-vio { font-size: 21px; font-weight: 700; fill: #9400d3; }
.t-lbl { font-size: 14px; fill: #b0c4de; text-anchor: end; }
.t-val { font-size: 14px; font-weight: 700; text-anchor: end; }
.v-gold { fill: #ffd700; } .v-oran { fill: #ff4500; } .v-lime { fill: #0f0; }
.t-imp { font-size: 18px; font-weight: 700; }
.v-fgold { fill: #ffd700; } .v-fred { fill: #f00; }
.t-avg { font-size: 16px; font-weight: 700; fill: #ff0; }
.sk-g { color: #32cd32; fill: #32cd32; }
.sk-d { color: #666; fill: #666; }

.tabbar {
  flex: none;
  height: 22px;
  margin: 1px 4px 0 4px;
  padding-left: 1px;
  background: #ece9d8;
  display: flex;
  align-items: stretch;
  font-size: 10.500px;
  color: #55534a;
  border-top: 1px solid #000;
}
.tab { flex: none; width: 79px; display: flex; align-items: center; justify-content: center; border-left: 1px solid #aca899; }
.tab.on { width: 76px; background: #fff; color: #000; border: 1px solid #000; border-top: 0; box-shadow: 1px 1px 0 #aca899; }
.tab.last { width: 76px; border-left: 0; position: relative; }
.tab.last::after { content: ""; position: absolute; right: 0; top: 3px; bottom: 5px; width: 1px; background: #8a887c; }
.tabarrows { margin-left: auto; margin-right: 2px; display: flex; align-items: center; }

.taskbar {
  flex: none;
  height: 24px;
  display: flex;
  align-items: flex-start;
  background: linear-gradient(#3a78e4 0 1px, #2a66d8 1px 4px, #3168d8);
  color: #fff;
  font-size: 12px;
  overflow: hidden;
}
.start { flex: none; width: 95px; height: 24px; margin-top: 4px; padding-left: 11px; display: flex; align-items: flex-start; gap: 5px; border-radius: 0 8px 0 0; background: linear-gradient(#5ab05a, #3c963c 60%, #358a35); box-shadow: inset -2px 0 2px #1f5a1f; }
.start svg { margin-top: 5px; }
.start span { font: italic 700 18px/20px "Liberation Sans", Arial, sans-serif; color: #fff; text-shadow: 1px 1px 1px #1a4a1a; margin-top: 5px; }
.quick { flex: none; width: 103px; height: 24px; display: flex; align-items: center; padding-left: 13px; gap: 9px; margin-top: 7px; }
.fx { font: italic 700 15px/15px "Liberation Serif", serif; color: #fff; }
.fx small { font-size: 10px; font-style: normal; }
.chev { flex: none; color: #b8cdf4; font-size: 13px; }
.quick .chev { margin: -12px 0 0 10px; }
.tasks { flex: none; display: flex; gap: 2px; margin-top: 7px; width: 577px; }
.task { flex: none; width: 143px; height: 20px; display: flex; align-items: flex-start; padding: 4px 0 0 8px; gap: 5px; font-size: 11.200px; line-height: 14px; white-space: nowrap; border-radius: 3px 3px 0 0; background: #3c81f3; box-shadow: inset 1px 1px 0 #5a98f8; }
.task svg { flex: none; }
.task.orange { background: linear-gradient(#f08c10, #e27b08); box-shadow: inset 0 1px 0 #f4a838; }
.task.pressed { background: #1c4fb8; box-shadow: inset 1px 1px 2px #0f3080; }
.task.pressed b { font-weight: 400; margin-left: 6px; }
.fxtask { gap: 3px; position: relative; }
.fxtask em { font-style: normal; font-weight: 700; color: #f8c060; margin-right: 3px; }
.dn { position: absolute; right: 6px; top: 11px; border: 3px solid transparent; border-top-color: #fff; border-bottom: 0; }
.links { flex: none; margin: 11px 0 0 10px; color: #b8cdf4; font-size: 11px; }
.taskbar > .chev { margin: 5px 0 0 7px; }
.tray { flex: none; margin: 3px 0 0 auto; width: 177px; height: 24px; display: flex; align-items: flex-start; gap: 3px; background: #1290e8; border-left: 1px solid #0a5ac8; box-shadow: inset 0 1px 0 #30a8f0; }
.tray svg { flex: none; margin-top: 5px; }
.trayback { flex: none; width: 18px; height: 18px; margin: 4px 0 0 -11px; border-radius: 50%; background: #dce8fb; border: 1px solid #1a50b0; display: flex; align-items: center; justify-content: center; }
.trayback svg { margin: 0; }
.trayscr { margin-left: 3px; margin-right: 1px; }
.tray time { margin: 8px 0 0 auto; padding-right: 14px; font-size: 11.500px; color: #fff; white-space: nowrap; }
```
